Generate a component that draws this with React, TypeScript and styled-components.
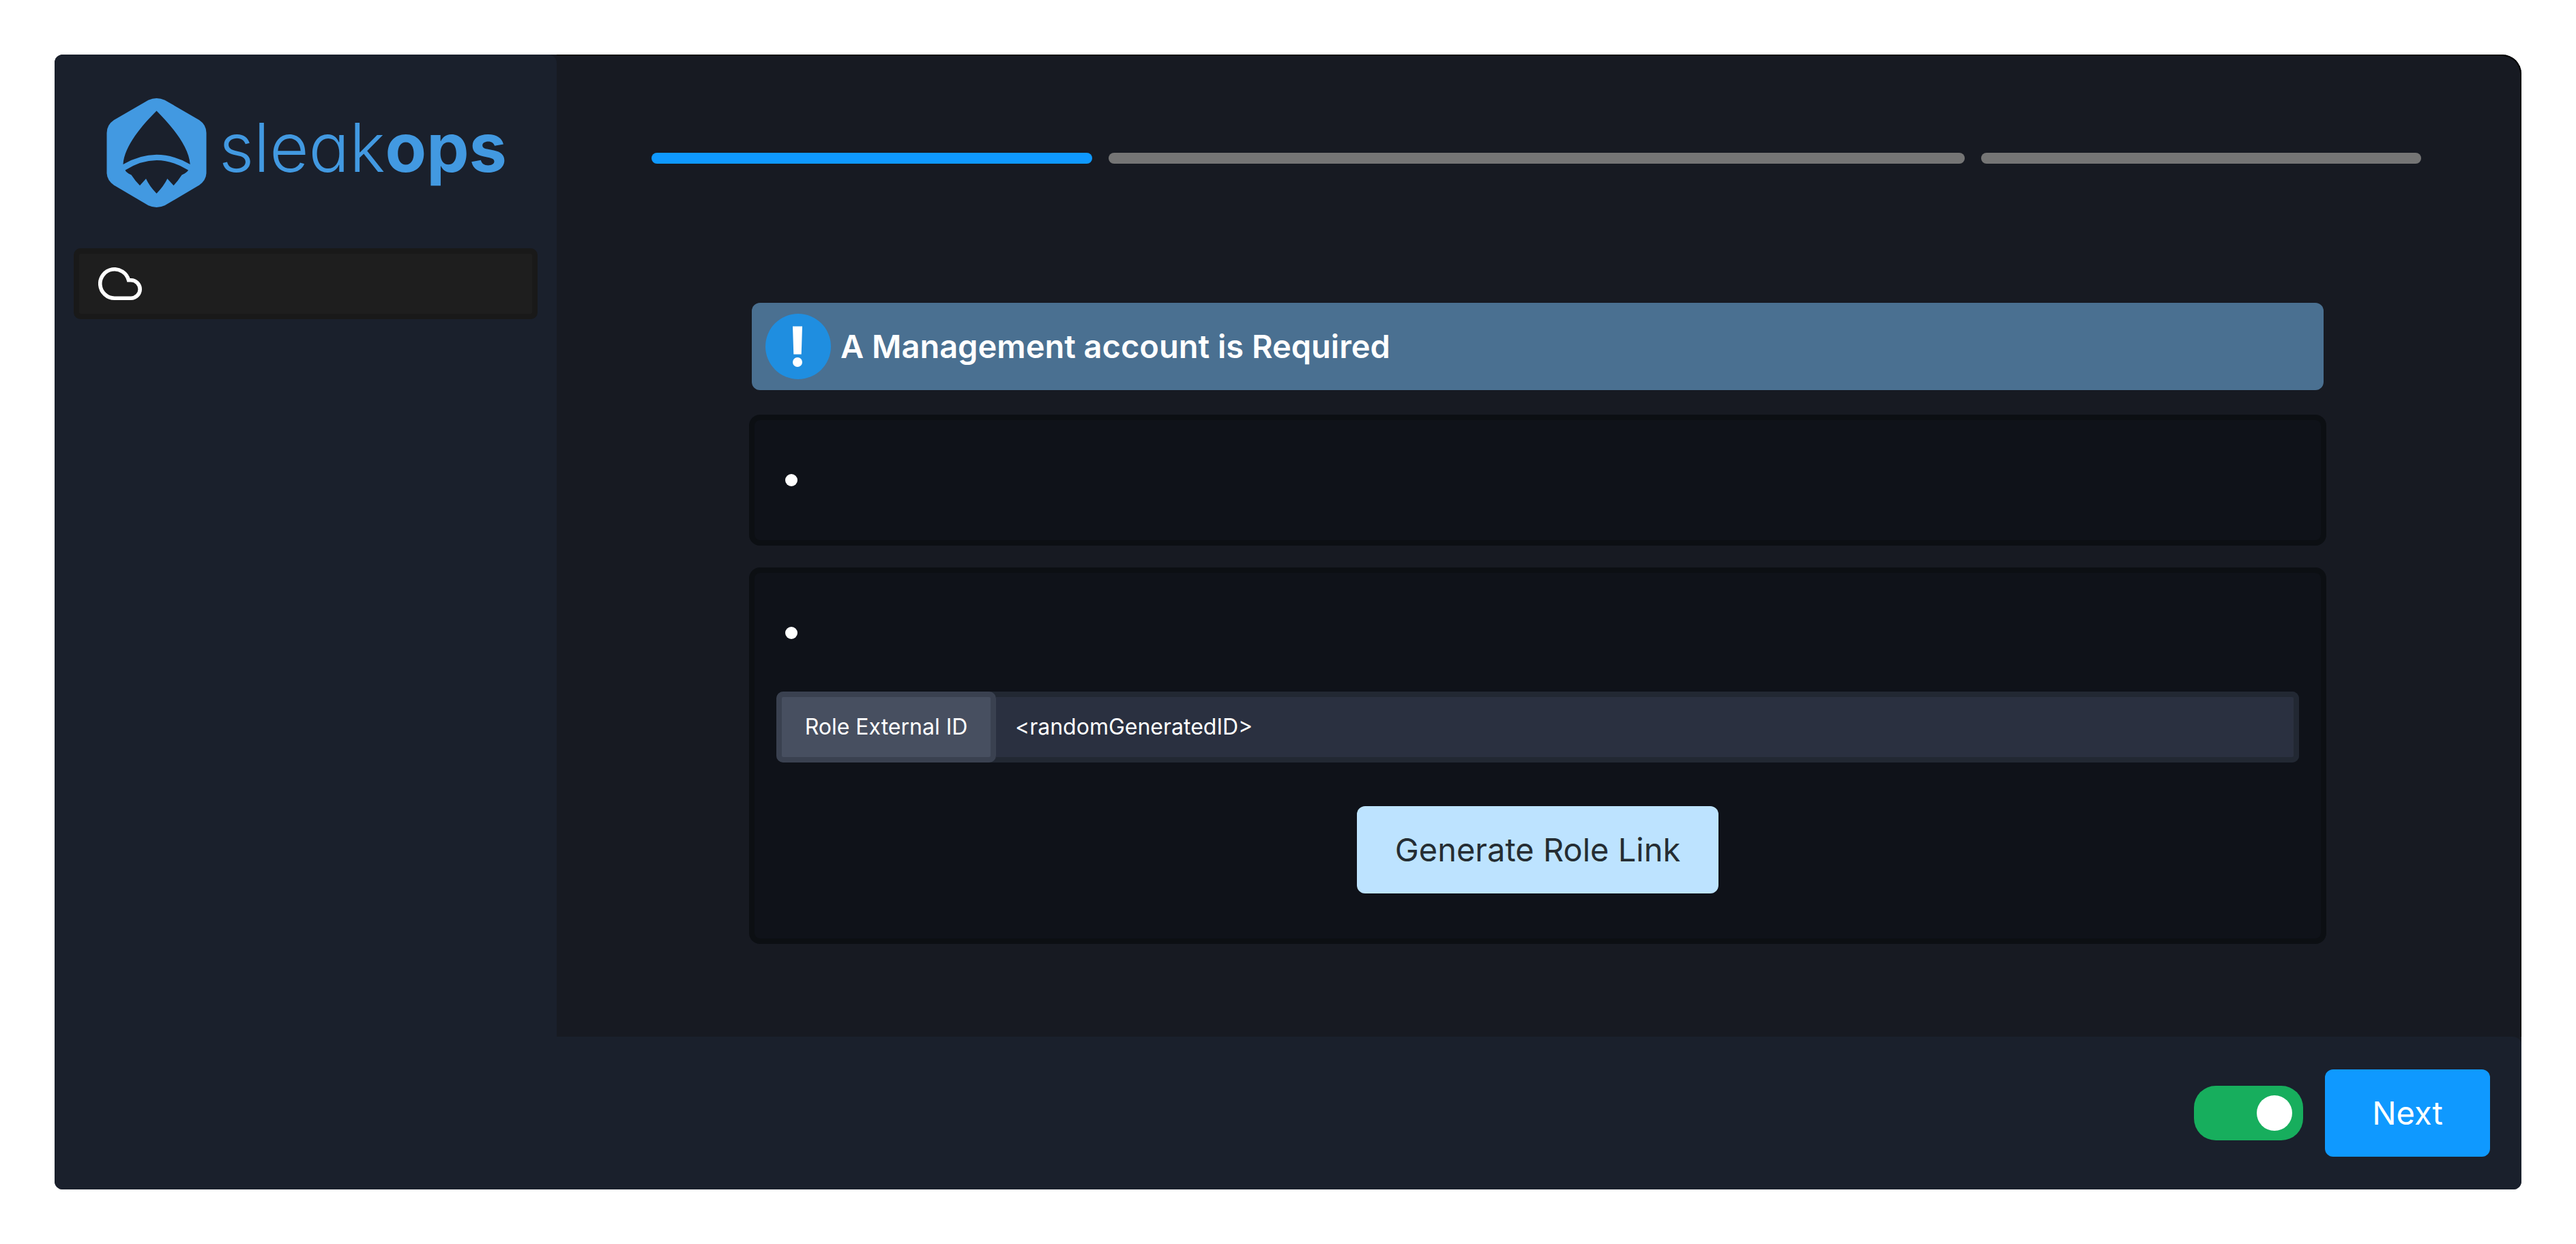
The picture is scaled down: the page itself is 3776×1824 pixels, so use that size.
import React from "react";
import styled, { createGlobalStyle } from "styled-components";

const color = {
  page: "#ffffff",
  edge: "#000000",
  panel: "#1a202c",
  main: "#171a22",
  accent: "#0f99ff",
  logo: "#4299e1",
};

const GlobalStyle = createGlobalStyle`
  *, *::before, *::after { box-sizing: border-box; }
  body {
    margin: 0;
    background: ${color.page};
    font-family: Inter, "Liberation Sans", sans-serif;
    color: #ffffff;
  }
  button, input { font: inherit; }
`;

const Page = styled.div`
  padding: 80px;
  min-height: 100vh;
  display: flex;
`;

const Frame = styled.div`
  flex: 1;
  display: flex;
  flex-direction: column;
  background: ${color.main};
  border-radius: 12px 28px 12px 12px;
  overflow: hidden;
`;

const Body = styled.div`
  flex: 1;
  display: flex;
`;

const Sidebar = styled.aside`
  width: 736px;
  flex-shrink: 0;
  padding: 64px 28px;
  display: flex;
  flex-direction: column;
  gap: 60px;
  background: ${color.panel};
  border-radius: 0 12px 0 0;
`;

const Brand = styled.a`
  display: flex;
  align-items: center;
  gap: 18px;
  padding-left: 48px;
  height: 160px;
  color: ${color.logo};
  text-decoration: none;
`;

const Wordmark = styled.span`
  padding-bottom: 16px;
  font-size: 99px;
  line-height: 120px;
  font-weight: 300;
  font-feature-settings: "cv11";
  white-space: nowrap;
  b {
    font-weight: 700;
  }
`;

const NavItem = styled.button`
  display: flex;
  align-items: center;
  height: 104px;
  padding: 0 28px;
  border: 8px solid #191919;
  border-radius: 10px;
  background: #1e1e1e;
  color: #ffffff;
`;

const Main = styled.main`
  flex: 1;
  padding: 142px 145px 136px 139px;
  display: flex;
  flex-direction: column;
  gap: 204px;
  background: ${color.main};
  border: solid ${color.edge};
  border-width: 2px 2px 0 0;
  border-radius: 0 28px 0 0;
`;

const Steps = styled.ol`
  display: flex;
  gap: 24px;
  margin: 0;
  padding: 0;
  list-style: none;
`;

const Step = styled.li<{ $active?: boolean; $grow: number }>`
  flex: ${(p) => p.$grow} 1 0;
  height: 16px;
  border-radius: 8px;
  background: ${(p) => (p.$active ? color.accent : "#757575")};
`;

const Content = styled.section`
  display: flex;
  flex-direction: column;
  gap: 32px;
  padding: 0 139px 0 143px;
`;

const Banner = styled.div`
  display: flex;
  align-items: center;
  gap: 14px;
  height: 128px;
  margin: 0 4px 4px;
  padding: 0 20px;
  border-radius: 12px;
  background: #4a7091;
`;

const BannerTitle = styled.h1`
  margin: 0;
  font-size: 47px;
  line-height: 60px;
  font-weight: 600;
`;

const Card = styled.div`
  min-height: 192px;
  border: 8px solid #0c0f13;
  border-radius: 16px;
  background: #0f1219;
  padding: 74px 32px 66px;
  display: flex;
  flex-direction: column;
  align-items: center;
`;

const Notes = styled.ul`
  align-self: stretch;
  margin: 0;
  padding: 0 0 0 13px;
  list-style: none;
`;

const Note = styled.li`
  display: flex;
  align-items: center;
  height: 28px;
  &::before {
    content: "";
    width: 18px;
    height: 18px;
    border-radius: 50%;
    background: #ffffff;
  }
`;

const Field = styled.div`
  align-self: stretch;
  display: flex;
  height: 104px;
  margin: 72px 0 64px;
  border-radius: 10px;
  background: #222833;
  font-size: 32px;
  line-height: 40px;
`;

const FieldLabel = styled.label`
  display: flex;
  align-items: center;
  justify-content: center;
  width: 322px;
  border: 8px solid #3a4150;
  border-radius: 10px;
  background: #474f60;
`;

const FieldInput = styled.input`
  flex: 1;
  min-width: 0;
  border: 8px solid #222833;
  border-left: 0;
  border-radius: 0 10px 10px 0;
  padding: 0 28px;
  background: #2a3040;
  color: #ffffff;
  outline: none;
`;

const Button = styled.button<{ $soft?: boolean }>`
  height: 128px;
  min-width: 242px;
  padding: 0 56px;
  border: 0;
  border-radius: 12px;
  font-size: 47px;
  line-height: 60px;
  font-weight: 400;
  background: ${(p) => (p.$soft ? "#bde3ff" : color.accent)};
  color: ${(p) => (p.$soft ? "#252d33" : "#ffffff")};
`;

const Footer = styled.footer`
  display: flex;
  align-items: center;
  justify-content: flex-end;
  gap: 32px;
  height: 224px;
  padding: 0 46px;
  background: ${color.panel};
  border-radius: 0 12px 0 0;
`;

const Switch = styled.input`
  appearance: none;
  display: flex;
  align-items: center;
  justify-content: flex-start;
  width: 160px;
  height: 80px;
  margin: 0;
  padding: 0 16px;
  border-radius: 32px;
  background: #757575;
  &::before {
    content: "";
    width: 52px;
    height: 52px;
    border-radius: 50%;
    background: #ffffff;
  }
  &:checked {
    justify-content: flex-end;
    background: #17ae5d;
  }
`;

const LogoMark = () => (
  <svg width="147" height="160" viewBox="0 0 147 160" aria-hidden="true">
    <path
      fill={color.logo}
      d="M61.500 2.700Q73.500 -2.700 85.500 2.700L136 32Q146.500 39 146.500 51V109Q146.500 120 136 127.500L85.500 157.300Q73.500 162.700 61.500 157.300L11 127.500Q0.500 120 0.500 109V51Q0.500 39 11 32Z"
    />
    <path
      fill={color.panel}
      d="M73.500 18.500C94 39 121 70 122.700 97Q73.500 68.500 24.500 97C26 70 53 39 73.500 18.500Z"
    />
    <path
      fill={color.panel}
      d="M27.500 105.500Q73.500 76.500 120 105.500Q118 109 110.500 112.500Q105 121 98.500 128L89.300 118Q84 129 73.500 139.700Q63 129 58 118L49 128Q42 121 36.500 112.500Q29 109 27.500 105.500Z"
    />
  </svg>
);

const Cloud = () => (
  <svg width="64" height="48" viewBox="0 0 64 48" fill="none" stroke="#ffffff" strokeWidth="5.6" aria-hidden="true">
    <path d="M24 45.200A21.200 21.200 0 1 1 44.500 18.800H48A13.200 13.200 0 0 1 48 45.200Z" />
  </svg>
);

const Alert = () => (
  <svg width="96" height="96" viewBox="0 0 96 96" aria-hidden="true">
    <circle cx="48" cy="48" r="48" fill="#1f8ee0" />
    <path fill="#ffffff" d="M40 18.600H54L52.700 59.500H41.300Z" />
    <circle cx="47" cy="71" r="7" fill="#ffffff" />
  </svg>
);

export default function App() {
  return (
    <>
      <GlobalStyle />
      <Page>
        <Frame>
          <Body>
            <Sidebar>
              <Brand href="#">
                <LogoMark />
                <Wordmark>
                  sleak<b>ops</b>
                </Wordmark>
              </Brand>
              <NavItem type="button" aria-label="Cloud">
                <Cloud />
              </NavItem>
            </Sidebar>
            <Main>
              <Steps>
                <Step $active $grow={646} />
                <Step $grow={1256} />
                <Step $grow={646} />
              </Steps>
              <Content>
                <Banner>
                  <Alert />
                  <BannerTitle>A Management account is Required</BannerTitle>
                </Banner>
                <Card>
                  <Notes>
                    <Note />
                  </Notes>
                </Card>
                <Card>
                  <Notes>
                    <Note />
                  </Notes>
                  <Field>
                    <FieldLabel htmlFor="role-id">Role External ID</FieldLabel>
                    <FieldInput id="role-id" defaultValue="<randomGeneratedID>" />
                  </Field>
                  <Button type="button" $soft>
                    Generate Role Link
                  </Button>
                </Card>
              </Content>
            </Main>
          </Body>
          <Footer>
            <Switch type="checkbox" defaultChecked aria-label="Enabled" />
            <Button type="button">Next</Button>
          </Footer>
        </Frame>
      </Page>
    </>
  );
}
